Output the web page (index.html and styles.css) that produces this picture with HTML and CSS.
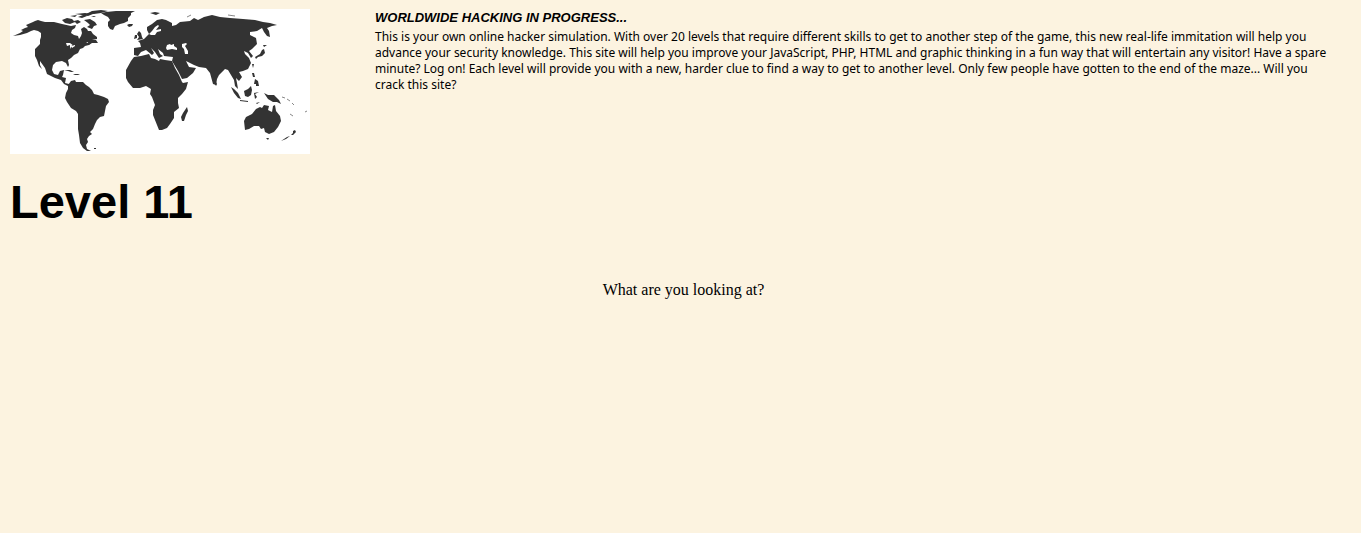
FILE: index.html
```html
<!DOCTYPE html>
<html lang="en">
<head>
<meta charset="utf-8">
<title>Level 11</title>
<link rel="stylesheet" href="styles.css">
</head>
<body>
<header class="header">
  <div class="brand">
    <svg class="map" viewBox="10 9 300 145" role="img" aria-label="World map">
      <g class="land">
        <!-- North and Central America -->
        <path d="M13 36L20 33 23 31 21 30 25 28 28 27 26 25 33 22 35 21 38 20 41 21 45 22 54 22 62 24 71 26 76 25 75 28 72 30 71 33 74 35 78 36 79 39 81 36 82 33 81 29 84 27 87 29 88 31 91 31 93 34 97 37 97 39 92 40 88 42 86 43 90 43 89 45 85 46 83 48 80 49 78 53 74 55 71 58 68 60 69 65 68 67 66 63 62 61 56 62 53 65 52 70 54 74 58 75 60 71 64 70 63 75 62 77 66 78 65 83 69 84 71 84 68 86 64 84 61 80 55 78 47 74 45 68 40 61 40 65 42 69 39 66 37 60 35 56 35 49 40 44 40 40 41 37 41 33 38 31 34 30 31 31 27 33 20 35z"/>
        <!-- Arctic islands -->
        <path d="M62 20l5-2 5 1 3 3-5 2-5-1zM74 21l4-1 3 2-4 2zM70 16l7-1-2 2zM78 17l5-2 4 1-5 2zM75 14l10-1 8 1-5 2-6-1zM86 14l6-3 9-1 7 1-7 2-7 1zM84 20l6-1 5 3 2 3-3 1-2 3-5-2 3-2-2-2zM91 17l3-1 2 1zM87 40l5 0 4 0 2 3-3 0-3 0-3 2z"/>
        <!-- Caribbean -->
        <path d="M64 70l6 0 4 2-3 0-3-1zM73 74l5 0 2 1-5 0z"/>
        <!-- South America -->
        <path d="M68 85L71 81 75 80 76 82 83 82 86 85 89 87 92 90 94 94 98 95 104 97 108 99 109 102 106 106 105 111 104 116 100 117 97 120 95 124 93 129 90 132 92 134 89 136 87 139 88 142 86 145 87 149 91 151 87 151 83 148 80 143 79 135 78 129 78 114 76 111 71 108 67 102 65 98 66 93 68 89z"/>
        <path d="M94 148l2 0 0 1-2 0z"/>
        <!-- Greenland, Iceland, Svalbard -->
        <path d="M101 13l5-1 10-1 9 0 10 0-4 2 0 2-3 3 0 3-4 2-4 1-5 2-2 4-3-1-2-3 0-4 2-2-2-3-4-2zM127 25l2-1 4 0-1 2-3 1zM150 13l5-1 5 1-4 2z"/>
        <!-- Africa -->
        <path d="M134 57L141 56 149 54 151 58 155 59 159 61 160 59 165 60 172 61 175 68 179 75 182 82 183 83 188 82 186 89 182 94 178 98 178 103 179 108 174 112 174 118 170 124 167 128 162 130 159 130 157 125 153 115 153 110 155 105 152 97 150 94 151 89 146 86 140 88 133 88 128 82 126 78 126 70 131 61z"/>
        <path d="M187 107l1 4-2 4-2 6-2 0-1-4 2-4z"/>
        <!-- Eurasia -->
        <path d="M134 55L134 48 141 47 140 43 138 41 144 39 147 36 149 34 147 30 147 27 152 24 157 20 162 19 166 20 172 23 172 26 176 25 180 22 190 21 194 18 198 20 204 17 212 15 220 17 230 18 243 19 255 20 263 22 270 23 277 25 272 26 267 28 269 31 270 37 267 36 264 32 262 28 257 31 250 32 250 35 256 38 257 44 252 49 249 51 253 56 251 58 248 53 244 51 245 54 249 58 251 63 248 69 243 71 239 72 242 77 239 81 236 78 237 83 238 89 235 86 234 80 231 75 228 70 225 69 219 75 217 79 216 85 213 84 210 73 206 68 199 67 194 65 186 61 189 67 196 68 193 73 187 78 182 79 178 71 172 61 173 57 164 56 163 53 158 49 160 54 163 56 159 58 155 52 151 48 154 53 152 55 146 50 141 52 138 56z"/>
        <!-- British Isles -->
        <path d="M139 31l2 2 1 4 1 2-6 1 2-3-2-3zM135 35l2 0 0 3-3 1z"/>
        <!-- Japan and Philippines -->
        <path d="M263 45l4 0-3 2zM264 49l1 4-3 3-4 1-2 2-1-2 5-3 2-4zM252 64l2 0-1 4zM252 73l2 0 1 4-2 0zM255 79l3 2 1 5-3 0 0-2-2 0z"/>
        <!-- South-east Asia and Oceania -->
        <path d="M216 82l1 2-1 2-1-2zM231 87l3 2 4 4 3 6-3-1-4-5zM240 100l8 1 0 1-8-1zM244 91l4-2 3-3 1 4-1 5-3 2-3-1zM254 93l5-1-4 2 2 3-2 2zM256 103l4-1-3 2zM264 93l4 2 6 0 5 5 2 4-4-2-4 0-5-3z"/>
        <path d="M245 130L244 121 246 117 252 114 256 109 260 107 262 108 264 105 269 106 268 110 272 112 273 106 275 105 276 111 280 116 281 121 278 127 274 132 269 134 265 132 264 128 261 129 259 126 254 126 249 129zM266 138l3 0-1 2zM281 141l6-4 3-1-4 3zM293 131l2-1 1 2-3 3-2 0 2-2z"/>
      </g>
      <g class="water">
        <path d="M66 43l4 0 4 3-2-1-2 4 0-4-3 1zM71 46l4-1 0 1-3 2z"/>
        <path d="M149 34l3-3 3-4 3-2 1 1-3 4 5-1 0 2-4 1-2 3-4 0z"/>
        <path d="M167 45l3-1 1 1 3-1 0 2 3 2 0 2-5-1-5 1-1-2zM182 44l4-1 1 1-2 2 3 5 0 3-3 0-1-5-2-2z"/>
        <path d="M178 17l8-1 1 1-5 2 4 2-3 0-4-2z"/>
      </g>
      <g class="islands">
        <path d="M282 97l3 1m2 1l3 2m2 2l2 2m-4 9l3 2M305 112l2-1M187 17l4-2M228 15l7 1"/>
      </g>
    </svg>
    <h1 class="level">Level 11</h1>
  </div>
  <section class="intro">
    <h2 class="title">WORLDWIDE HACKING IN PROGRESS...</h2>
    <p class="text">This is your own online hacker simulation. With over 20 levels that require different skills to get to another step of the game, this new real-life immitation will help you advance your security knowledge. This site will help you improve your JavaScript, PHP, HTML and graphic thinking in a fun way that will entertain any visitor! Have a spare minute? Log on! Each level will provide you with a new, harder clue to find a way to get to another level. Only few people have gotten to the end of the maze... Will you crack this site?</p>
  </section>
</header>
<main class="question">What are you looking at?</main>
</body>
</html>
```
FILE: styles.css
```css
body {
  margin: 0;
  padding: 9px 10px;
  background: #fcf3e0;
  color: #000;
  font: 16px/20px "Liberation Serif", serif;
}
.header {
  display: grid;
  grid-template-columns: 300px 1fr;
  column-gap: 65px;
}
.map {
  display: block;
  width: 100%;
  background: #fff;
}
.land { fill: #333; }
.water { fill: #fff; }
.islands {
  fill: none;
  stroke: #888;
}
.level {
  margin: 20px 0 0;
  font: bold 47px/56px "Liberation Sans", sans-serif;
}
.title {
  margin: 0 0 2px;
  font: italic bold 13px/18px "Liberation Sans", sans-serif;
}
.text {
  margin: 0;
  padding-right: 20px;
  font: 12px/16px "Noto Sans", sans-serif;
}
.question {
  margin-top: 50px;
  padding-left: 6px;
  text-align: center;
}
```
